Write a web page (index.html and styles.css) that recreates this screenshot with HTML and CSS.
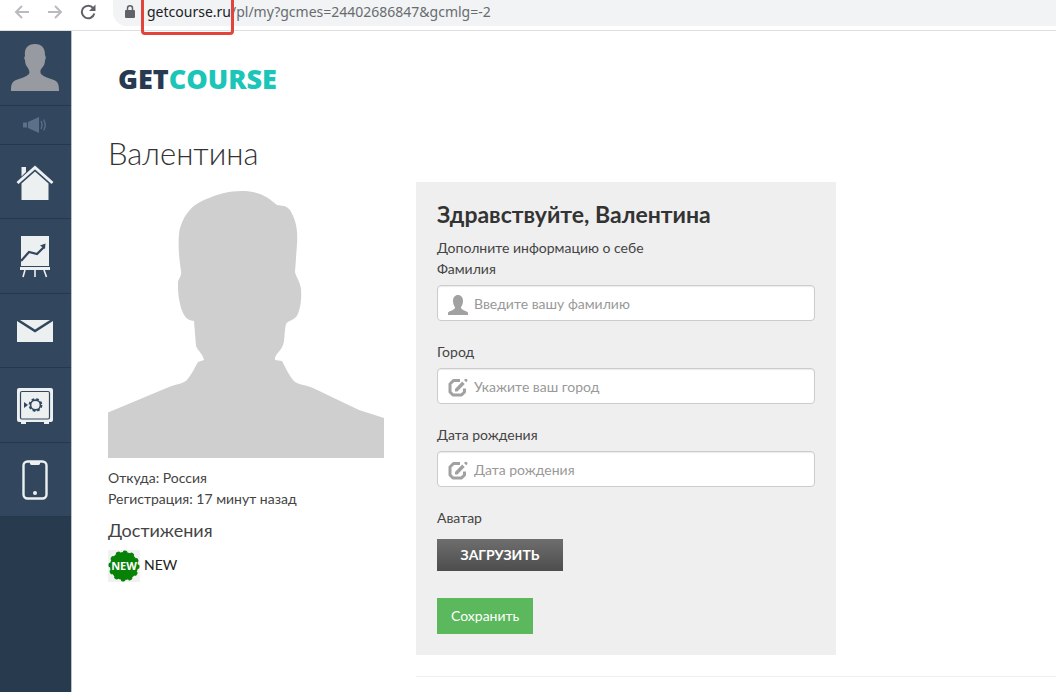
FILE: index.html
```html
<!DOCTYPE html>
<html lang="ru">
<head>
  <meta charset="UTF-8">
  <meta name="viewport" content="width=device-width, initial-scale=1.0">
  <title>GetCourse - Валентина</title>
  <link rel="stylesheet" href="styles.css">
</head>
<body>
  <header class="browser-bar">
    <button class="nav-btn" type="button" aria-label="Назад">
      <svg width="16" height="16" viewBox="0 0 16 16"><path d="M15 8H2M8 2L2 8l6 6"/></svg>
    </button>
    <button class="nav-btn" type="button" aria-label="Вперёд">
      <svg width="16" height="16" viewBox="0 0 16 16"><path d="M1 8h13M8 2l6 6-6 6"/></svg>
    </button>
    <button class="nav-btn reload" type="button" aria-label="Обновить">
      <svg width="16" height="16" viewBox="0 0 16 16"><path d="M13.2 4.2A6.300 6.300 0 1 0 14.300 9.500"/><path class="solid" d="M15.500 0.500v6.500H9z"/></svg>
    </button>
    <div class="address">
      <svg class="lock" width="10" height="13" viewBox="0 0 10 13"><path d="M1 5h8a1 1 0 0 1 1 1v6a1 1 0 0 1-1 1H1a1 1 0 0 1-1-1V6a1 1 0 0 1 1-1z"/><path d="M2.500 6V3.300a2.500 2.500 0 0 1 5 0V6" fill="none" stroke="#5f6368" stroke-width="1.500"/></svg>
      <div class="url"><span class="domain">getcourse.ru<span class="highlight"></span></span>/pl/my?gcmes=24402686847&amp;gcmlg=-2</div>
    </div>
  </header>

  <div class="layout">
    <nav class="sidebar">
      <a class="side-item side-user" href="#" aria-label="Профиль">
        <svg width="48" height="48" viewBox="0 0 48 48"><path fill="#979ba1" d="M0 47c0-7 1-9 5-11 5-2 10-3 13-6 1-2 0-4-1-6-2-2-3-5-3-8-1-1-1-3 0-4C13 4 17 0 24 0s10 4 10 11c1 2 1 4 0 5 0 3-1 6-3 8s-2 4-1 6c3 3 8 4 13 6 4 2 5 4 5 11z"/></svg>
      </a>
      <a class="side-item side-news" href="#" aria-label="Объявления">
        <svg width="24" height="16" viewBox="0 0 24 16"><g fill="#5a7189"><path d="M0 5.500h4v5H0zM5 5l11-5v16L5 11z"/></g><path d="M18 4q2 4 0 8M20.500 2.500q3.500 5.500 0 11" fill="none" stroke="#5a7189" stroke-width="1.300"/></svg>
      </a>
      <div class="side-group">
        <a class="side-item" href="#" aria-label="Главная">
          <svg width="38" height="36" viewBox="0 0 38 36"><path fill="#ecf0f1" d="M5.500 2H10v5l-4.500 4.500z"/><path d="M1.500 18L19 2.500 36.500 18" fill="none" stroke="#ecf0f1" stroke-width="3"/><path fill="#ecf0f1" d="M5.500 18.500L19 6.500l13.500 12V35h-27z"/></svg>
        </a>
        <a class="side-item" href="#" aria-label="Обучение">
          <svg width="30" height="42" viewBox="0 0 30 42"><path fill="#ecf0f1" d="M1 0h28v30H1zM0 31h30v3H0z"/><path d="M1 25l8-9 8 2 7-7" fill="none" stroke="#32475d" stroke-width="2.200"/><path fill="#32475d" d="M20 9.500l5.500-2-.500 5.500z"/><path d="M5 34l-2 7M15 34v7M24 34l2.500 7" fill="none" stroke="#ecf0f1" stroke-width="1.600"/></svg>
        </a>
        <a class="side-item" href="#" aria-label="Сообщения">
          <svg width="36" height="22" viewBox="0 0 36 22"><path fill="#ecf0f1" d="M0 1l18 11.500L36 1v21H0z"/><path fill="#ecf0f1" d="M3 0h30L18 9.500z"/></svg>
        </a>
        <a class="side-item" href="#" aria-label="Покупки">
          <svg width="36" height="36" viewBox="0 0 36 36"><path fill="#ecf0f1" d="M2 0h32a2 2 0 0 1 2 2v30a2 2 0 0 1-2 2h-2v2h-5v-2H9v2H4v-2H2a2 2 0 0 1-2-2V2a2 2 0 0 1 2-2z"/><rect x="3.500" y="3.500" width="29" height="27.500" rx="1.500" fill="none" stroke="#32475d" stroke-width="1.200"/><path fill="#32475d" d="M7 14l4 3-4 3z"/><circle cx="18.500" cy="17" r="4.900" fill="none" stroke="#32475d" stroke-width="1.600"/><circle cx="18.500" cy="17" r="6" fill="none" stroke="#32475d" stroke-width="1.800" stroke-dasharray="2.700 2.010"/></svg>
        </a>
        <a class="side-item" href="#" aria-label="Приложение">
          <svg width="26" height="40" viewBox="0 0 26 40"><rect x="1.500" y="1.500" width="23" height="37" rx="4" fill="none" stroke="#ecf0f1" stroke-width="2.400"/><path fill="#ecf0f1" d="M8 1h10v2.500q0 1.500-2 1.500h-6q-2 0-2-1.500z"/><circle cx="13" cy="33" r="2" fill="#ecf0f1"/></svg>
        </a>
      </div>
    </nav>

    <main class="content">
      <a class="logo" href="#">GET<span>COURSE</span></a>
      <h1>Валентина</h1>

      <div class="columns">
        <section class="profile">
          <svg class="photo" viewBox="0 0 276 276" role="img" aria-label="Фото профиля"><path fill="#cfcfcf" d="M0 276V230.500L61 205C68 202 75 202 79 198 84 192 87 185 90 180L96 178C95 172 90 169 88 164L86 139C78 138 76 134 73 126 70 114 70 108 70 101 70 97 74 94 73 89 70 70 70 54 72 46 77 30 85 23 96 18 110 12 120 9 134 9 151 9 160 15 169 23 174 24 178 23 182 28 188 38 190 48 189 62L187 90C188 95 192 99 193 107 194 121 191 133 187 136 183 139 180 139 178 142 176 151 177 158 175 163 173 169 166 173 167 178L174 179C178 186 181 194 187 200 192 203 198 203 205 206L251 228 276 236V276z"/></svg>
          <p>Откуда: Россия</p>
          <p>Регистрация: 17 минут назад</p>
          <h2>Достижения</h2>
          <div class="badge-row">
            <span class="badge"><svg width="32" height="32" viewBox="0 0 32 32"><circle cx="16" cy="16" r="14" fill="#078207"/><circle cx="16" cy="16" r="14" fill="none" stroke="#078207" stroke-width="3" stroke-linecap="round" stroke-dasharray="1.500 5.830"/><text class="badge-text" x="16" y="20" text-anchor="middle">NEW</text></svg></span>
            <span>NEW</span>
          </div>
        </section>

        <section class="details">
          <form class="card">
            <h3>Здравствуйте, Валентина</h3>
            <p>Дополните информацию о себе</p>
            <div class="field">
              <label for="surname">Фамилия</label>
              <div class="input-box">
                <svg width="20" height="20" viewBox="0 0 20 20"><path fill="#a1a1a1" d="M0 20v-2c0-2 6-2.500 7-5 .4-1-2-3-2-7 0-3.500 2-6 5-6s5 2.500 5 6c0 4-2.400 6-2 7 1 2.500 7 3 7 5v2z"/></svg>
                <input id="surname" type="text" placeholder="Введите вашу фамилию">
              </div>
            </div>
            <div class="field">
              <label for="city">Город</label>
              <div class="input-box">
                <svg width="20" height="20" viewBox="0 0 20 20"><path d="M12 2.500H5.500L2 6v8L5 17h8.500l3-3V10.500" fill="none" stroke="#a1a1a1" stroke-width="3" stroke-linejoin="round"/><path fill="#a1a1a1" d="M7 13.500v-2.500L14.200 3.500l2.500 2.500L9.500 13.500zM16 2l1-1q1-.8 2 .2t.200 2l-1 1z"/></svg>
                <input id="city" type="text" placeholder="Укажите ваш город">
              </div>
            </div>
            <div class="field">
              <label for="birthday">Дата рождения</label>
              <div class="input-box">
                <svg width="20" height="20" viewBox="0 0 20 20"><path d="M12 2.500H5.500L2 6v8L5 17h8.500l3-3V10.500" fill="none" stroke="#a1a1a1" stroke-width="3" stroke-linejoin="round"/><path fill="#a1a1a1" d="M7 13.500v-2.500L14.200 3.500l2.500 2.500L9.500 13.500zM16 2l1-1q1-.8 2 .2t.200 2l-1 1z"/></svg>
                <input id="birthday" type="text" placeholder="Дата рождения">
              </div>
            </div>
            <p id="avatar-label">Аватар</p>
            <button class="btn-upload" type="button" aria-describedby="avatar-label">ЗАГРУЗИТЬ</button>
            <button class="btn-save" type="submit">Сохранить</button>
          </form>
          <hr>
        </section>
      </div>
    </main>
  </div>
</body>
</html>
```
FILE: styles.css
```css
* {
  box-sizing: border-box;
}
body {
  display: flex;
  flex-direction: column;
  min-height: 100vh;
  margin: 0;
  overflow: hidden;
  font-family: Lato, "Open Sans", sans-serif;
  font-size: 14px;
  line-height: 21px;
  color: #444;
  background: #fff;
}
h1, h2, h3, p {
  margin: 0;
}
button, input {
  font: inherit;
}

/* browser toolbar */
.browser-bar {
  display: flex;
  height: 31px;
  padding-left: 14px;
  border-bottom: 1px solid #dcdee0;
}
.nav-btn {
  display: flex;
  width: 16px;
  margin-right: 17px;
  padding: 4px 0 0;
  border: 0;
  background: none;
}
.nav-btn svg {
  fill: none;
  stroke: #b9bbbe;
  stroke-width: 2;
}
.nav-btn.reload svg {
  stroke: #5f6368;
}
.nav-btn.reload .solid {
  fill: #5f6368;
  stroke: none;
}
.address {
  display: flex;
  flex: 1;
  gap: 12px;
  height: 26px;
  padding-left: 12px;
  border-radius: 0 0 0 14px;
  background: #f1f3f4;
}
.lock {
  margin-top: 5px;
  fill: #5f6368;
}
.url {
  font-family: "Noto Sans", sans-serif;
  font-size: 14px;
  line-height: 24px;
  color: #686c70;
}
.domain {
  position: relative;
  color: #202124;
}
.highlight {
  position: absolute;
  top: -12px;
  right: -3px;
  bottom: -14px;
  left: -6px;
  border: 3px solid #e2443b;
  border-radius: 4px;
}

/* left menu */
.layout {
  display: flex;
  flex: 1;
}
.sidebar {
  width: 72px;
  border-right: 1px solid #b9c1c9;
  background: #283b4e;
}
.side-item {
  display: flex;
  align-items: center;
  justify-content: center;
  padding-right: 2px;
  border-bottom: 1px solid #26394c;
  background: #32475d;
}
.side-user {
  height: 75px;
}
.side-news {
  height: 39px;
}
.side-group {
  display: grid;
  grid-auto-rows: 1fr;
  height: 372px;
}
.side-group .side-item {
  padding-top: 2px;
}

/* page */
.content {
  flex: 1;
  padding: 32px 0 0 36px;
}
.logo {
  display: block;
  margin-left: 10px;
  font-family: "Open Sans", sans-serif;
  font-size: 27px;
  font-weight: 800;
  line-height: 32px;
  color: #273a50;
  text-decoration: none;
}
.logo span {
  color: #1bc5b8;
}
h1 {
  margin: 40px 0 11px;
  font-size: 31px;
  font-weight: 300;
  line-height: 36px;
  color: #333;
}
.columns {
  display: flex;
  gap: 32px;
}
.profile {
  width: 276px;
}
.photo {
  display: block;
  width: 100%;
  margin-bottom: 9px;
}
h2 {
  margin: 8px 0 7px;
  font-size: 18px;
  font-weight: 400;
  line-height: 26px;
}
.badge-row {
  display: flex;
  gap: 4px;
  line-height: 30px;
  color: #222;
}
.badge {
  width: 32px;
  height: 32px;
  background: #f1f1f1;
}
.badge svg {
  display: block;
}
.badge-text {
  font-family: "Open Sans", sans-serif;
  font-size: 11px;
  font-weight: 700;
  fill: #fff;
}
.details {
  flex: 1;
}
.card {
  max-width: 420px;
  padding: 20px 21px 21px;
  background: #efefef;
}
h3 {
  margin-bottom: 11px;
  font-size: 23px;
  font-weight: 700;
  line-height: 24px;
  color: #333;
}
.field {
  margin-bottom: 20px;
}
.field label {
  display: block;
  margin-bottom: 6px;
}
.input-box {
  display: flex;
  align-items: center;
  gap: 6px;
  height: 36px;
  padding: 0 10px;
  border: 1px solid #ccc;
  border-radius: 4px;
  background: #fff;
  box-shadow: inset 0 1px 1px rgba(0, 0, 0, 0.08);
}
.input-box svg {
  margin-top: 4px;
}
.input-box input {
  flex: 1;
  padding: 0;
  border: 0;
  outline: 0;
  background: none;
}
.input-box input::placeholder {
  color: #999;
}
.btn-upload,
.btn-save {
  display: block;
  border: 0;
  color: #fff;
}
.btn-upload {
  width: 126px;
  height: 32px;
  margin: 11px 0 27px;
  padding-bottom: 3px;
  font-weight: 700;
  background: linear-gradient(#6e6e6e, #4d4d4d);
}
.btn-save {
  height: 36px;
  padding: 0 14px 2px;
  background: #5cb85c;
}
hr {
  margin: 21px 0 0;
  border: 0;
  border-top: 1px solid #eee;
}
```
